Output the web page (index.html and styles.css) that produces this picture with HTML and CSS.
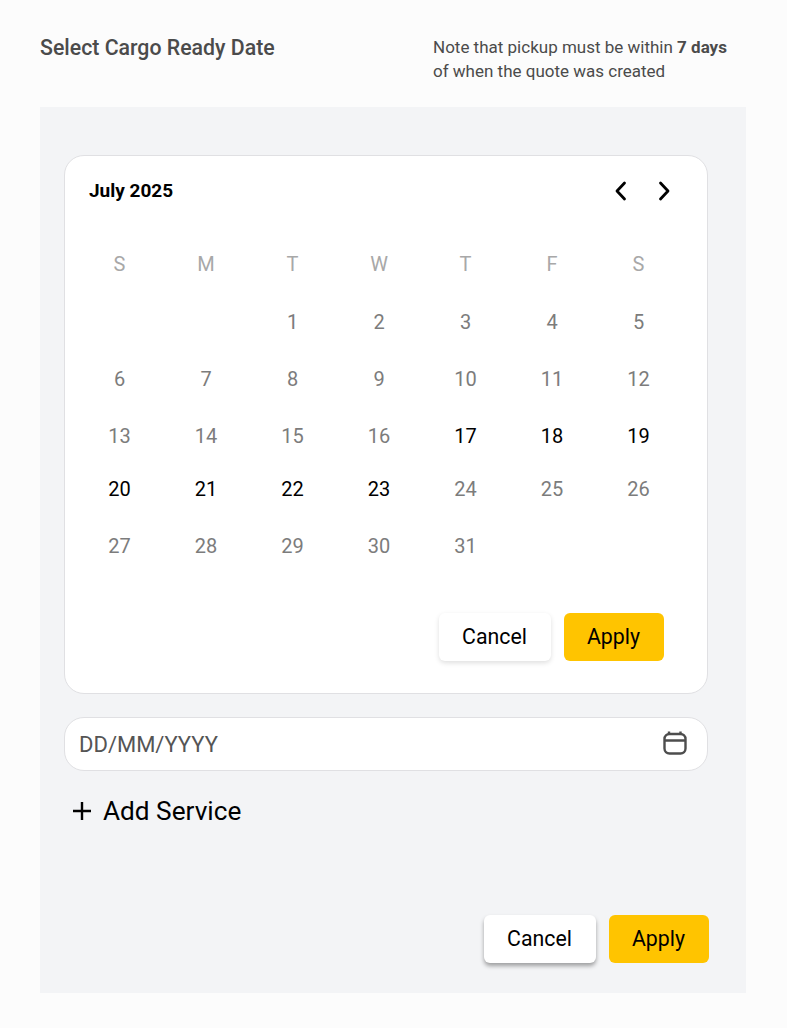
FILE: index.html
```html
<!DOCTYPE html>
<html lang="en">
<head>
    <meta charset="UTF-8">
    <meta name="viewport" content="width=device-width, initial-scale=1.0">
    <title>Select Cargo Ready Date</title>
    <link rel="stylesheet" href="styles.css">
</head>
<body>
    <div class="header">
        <h1 class="title">Select Cargo Ready Date</h1>
        <p class="note">Note that pickup must be within <b>7 days</b><br>of when the quote was created</p>
    </div>

    <div class="panel">
        <div class="calendar">
            <div class="cal-head">
                <span class="month">July 2025</span>
                <div class="arrows">
                    <svg class="arrow" width="14" height="20" viewBox="0 0 14 20"><path d="M10.5 2 3 10l7.5 8"/></svg>
                    <svg class="arrow" width="14" height="20" viewBox="0 0 14 20"><path d="M3.5 2 11 10l-7.5 8"/></svg>
                </div>
            </div>
            <div class="days">
                <span class="weekday">S</span><span class="weekday">M</span><span class="weekday">T</span><span class="weekday">W</span><span class="weekday">T</span><span class="weekday">F</span><span class="weekday">S</span>
                <span></span><span></span><span>1</span><span>2</span><span>3</span><span>4</span><span>5</span>
                <span>6</span><span>7</span><span>8</span><span>9</span><span>10</span><span>11</span><span>12</span>
                <span>13</span><span>14</span><span>15</span><span>16</span><span class="on">17</span><span class="on">18</span><span class="on">19</span>
                <span class="on">20</span><span class="on">21</span><span class="on">22</span><span class="on">23</span><span>24</span><span>25</span><span>26</span>
                <span>27</span><span>28</span><span>29</span><span>30</span><span>31</span><span></span><span></span>
            </div>
            <div class="actions cal-actions">
                <a href="#cancel" class="btn cancel">Cancel</a>
                <a href="#apply" class="btn apply">Apply</a>
            </div>
        </div>

        <div class="date-input">
            <span>DD/MM/YYYY</span>
            <svg width="26" height="26" viewBox="0 0 26 26" class="cal-icon"><rect x="2.5" y="3" width="21" height="19.5" rx="5"/><path d="M2.5 9.5h21M7 .5v3M18.5 .5v3"/></svg>
        </div>

        <a href="#add" class="add-service">
            <svg width="18" height="18" viewBox="0 0 18 18" class="plus"><path d="M9 0v18M0 9h18"/></svg>
            Add Service
        </a>

        <div class="actions footer-actions">
            <a href="#cancel" class="btn cancel big-shadow">Cancel</a>
            <a href="#apply" class="btn apply">Apply</a>
        </div>
    </div>
</body>
</html>
```

FILE: styles.css
```css
*{
    box-sizing: border-box;
}
body{
    margin: 0;
    background-color: #fcfcfc;
    font-family: Roboto, "Liberation Sans", sans-serif;
    height: 1028px;
    padding: 0 40px;
}

.header{
    display: flex;
    height: 107px;
    padding-top: 35px;
}
.title{
    margin: 0;
    width: 393px;
    font-size: 21.3px;
    font-weight: 500;
    line-height: 26px;
    color: #4b4b4b;
}
.note{
    margin: 0;
    font-size: 17px;
    line-height: 24px;
    color: #4b4b4b;
}

.panel{
    width: 706px;
    height: 886px;
    padding: 48px 38px 0 24px;
    background-color: #f3f4f6;
}

.calendar{
    width: 644px;
    height: 539px;
    padding: 0 12px 0 11.25px;
    background-color: #fff;
    border: 1px solid #e0e0e3;
    border-radius: 20px;
}
.cal-head{
    display: flex;
    justify-content: space-between;
    align-items: center;
    height: 70px;
    padding: 0 24px 0 12.75px;
}
.month{
    font-size: 19px;
    font-weight: 700;
    color: #000;
    margin-top: -1px;
}
.arrows{
    display: flex;
    gap: 29px;
}
.arrow path{
    fill: none;
    stroke: #000;
    stroke-width: 2.8;
    stroke-linecap: round;
    stroke-linejoin: round;
}

.days{
    display: grid;
    grid-template-columns: repeat(7, 86.5px);
    grid-template-rows: 58px 57px 57px 53px 57px 57px;
    margin-top: 10px;
    font-size: 20px;
    color: #7c7c7c;
    text-align: center;
    line-height: 57px;
}
.days .weekday{
    color: #a8a8a8;
}
.days .on{
    color: #000;
}

.actions{
    display: flex;
    justify-content: flex-end;
    gap: 13px;
}
.cal-actions{
    padding-right: 31px;
    margin-top: 38px;
}
.btn{
    display: block;
    height: 48px;
    line-height: 48px;
    font-size: 21.3px;
    text-align: center;
    text-decoration: none;
    color: #000;
    border-radius: 6px;
    padding-right: 1px;
}
.btn.cancel{
    width: 112px;
    background-color: #fff;
    box-shadow: 0 2px 5px rgba(0, 0, 0, 0.13);
}
.btn.big-shadow{
    box-shadow: 0 3px 4px rgba(0, 0, 0, 0.35);
}
.btn.apply{
    width: 100px;
    background-color: #ffc400;
}

.date-input{
    display: flex;
    justify-content: space-between;
    align-items: center;
    width: 644px;
    height: 54px;
    margin-top: 23px;
    padding: 0 19px 0 14px;
    background-color: #fff;
    border: 1px solid #e0e0e3;
    border-radius: 20px;
    font-size: 22px;
    color: #555;
}
.cal-icon rect, .cal-icon path{
    fill: none;
    stroke: #4d4d4d;
    stroke-width: 2.4;
}

.add-service{
    display: flex;
    align-items: center;
    gap: 12.3px;
    margin-top: 22px;
    padding-left: 8.7px;
    height: 36px;
    font-size: 26.2px;
    color: #000;
    text-decoration: none;
}
.plus path{
    fill: none;
    stroke: #000;
    stroke-width: 2.4;
}

.footer-actions{
    width: 645px;
    margin-top: 86px;
}
```
